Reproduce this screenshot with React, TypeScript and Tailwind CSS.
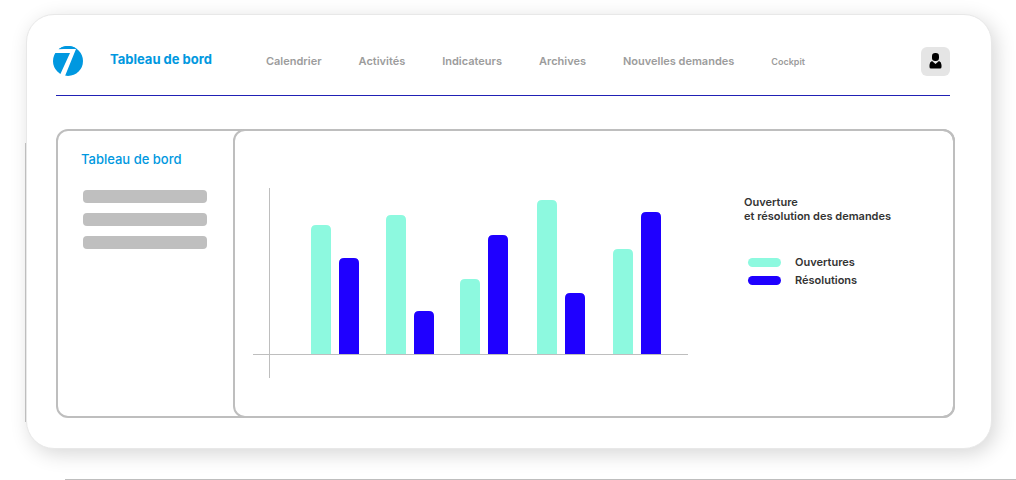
import type React from 'react';

interface Demand {
  x: number;
  opened: number;
  resolved: number;
}

const DEMANDS: Demand[] = [
  { x: 58, opened: 129, resolved: 96 },
  { x: 133, opened: 139, resolved: 43 },
  { x: 207, opened: 75, resolved: 119 },
  { x: 284, opened: 154, resolved: 61 },
  { x: 360, opened: 105, resolved: 142 },
];

const NAV_ITEMS = [
  'Calendrier',
  'Activités',
  'Indicateurs',
  'Archives',
  'Nouvelles demandes',
];

const BASELINE = 166;

const Logo: React.FC = () => (
  <svg width="30" height="30" viewBox="0 0 30 30" aria-hidden="true">
    <circle cx="15" cy="15" r="15" fill="#0098e0" />
    <path d="M2 3H23L12 30H6.5L17 7H1Z" fill="#fff" />
    <path d="M5.5 3.2A15 15 0 0 1 22.5 2L22 2.5Z" fill="#0098e0" />
  </svg>
);

const barPath = (x: number, height: number) => {
  const top = BASELINE - height;
  return `M${x} ${BASELINE}V${top + 5}Q${x} ${top} ${x + 5} ${top}H${x + 15}Q${x + 20} ${top} ${x + 20} ${top + 5}V${BASELINE}Z`;
};

const DemandChart: React.FC = () => (
  <svg
    width="435"
    height="190"
    viewBox="0 0 435 190"
    role="img"
    aria-label="Ouverture et résolution des demandes"
    className="shrink-0"
  >
    {DEMANDS.map((demand) => (
      <g key={demand.x}>
        <path d={barPath(demand.x, demand.opened)} fill="#8df9df" />
        <path d={barPath(demand.x + 28, demand.resolved)} fill="#1f00ff" />
      </g>
    ))}
    <rect x="16" y="0" width="1" height="190" fill="#bebebe" />
    <rect x="0" y="166" width="435" height="1" fill="#bebebe" />
  </svg>
);

const Header: React.FC = () => (
  <header className="flex items-center pt-[31px] pb-[18px] pl-[26px] pr-[41px]">
    <Logo />
    <a
      href="#"
      className="ml-[27px] text-[13px] leading-5 pb-1 font-bold text-[#0098e0] whitespace-nowrap"
    >
      Tableau de bord
    </a>
    <nav className="ml-[54px] flex items-baseline gap-[37px] text-[11px] leading-4 font-semibold text-[#9c9c9c] whitespace-nowrap">
      {NAV_ITEMS.map((item) => (
        <a key={item} href="#">
          {item}
        </a>
      ))}
      <a href="#" className="text-[9px]">
        Cockpit
      </a>
    </nav>
    <button
      type="button"
      aria-label="Profil"
      className="ml-auto flex size-[29px] shrink-0 items-center justify-center rounded-md bg-[#e5e5e5]"
    >
      <svg width="13" height="16" viewBox="0 0 13 16" aria-hidden="true">
        <rect x="3" y="0" width="7" height="8" rx="3.2" />
        <path d="M3 8L6.5 11L10 8Q12.5 9 12.5 12V14Q12.5 15.5 11 15.5H2Q.5 15.5 .5 14V12Q.5 9 3 8Z" />
      </svg>
    </button>
  </header>
);

const Sidebar: React.FC = () => (
  <aside className="w-[175px] shrink-0 pt-[18px] pl-[23px]">
    <h2 className="text-[13px] leading-5 font-medium text-[#0098e0]">
      Tableau de bord
    </h2>
    <div className="mt-[21px] ml-0.5 flex w-[124px] flex-col gap-[10px]">
      <div className="h-[13px] rounded bg-[#bfbfbf]" />
      <div className="h-[13px] rounded bg-[#bfbfbf]" />
      <div className="h-[13px] rounded bg-[#bfbfbf]" />
    </div>
  </aside>
);

const Legend: React.FC = () => (
  <div className="ml-14 mt-[7px] text-[11px] font-semibold text-[#333] whitespace-nowrap">
    <h3 className="leading-[14px]">
      Ouverture
      <br />
      et résolution des demandes
    </h3>
    <ul className="mt-[30px] ml-1 leading-[18px]">
      <li className="flex items-center gap-[14px]">
        <span className="h-[9px] w-[33px] rounded-full bg-[#8df9df]" />
        Ouvertures
      </li>
      <li className="flex items-center gap-[14px]">
        <span className="h-[9px] w-[33px] rounded-full bg-[#1f00ff]" />
        Résolutions
      </li>
    </ul>
  </div>
);

export default function App() {
  return (
    <div className="overflow-hidden bg-white pt-[14px] font-['Inter',sans-serif]">
      <div className="relative ml-[26px] mr-6 rounded-[28px] border border-[#e8e8e8] bg-white pb-[30px] shadow-[4px_5px_20px_rgba(0,0,0,0.16)]">
        <div className="absolute top-32 bottom-[26px] -left-0.5 w-px bg-[#bebebe]" />
        <Header />
        <hr className="ml-[29px] mr-[41px] mt-px border-0 h-px bg-[#2121b5]" />
        <main className="mt-[33px] ml-[29px] mr-9 flex rounded-xl border-2 border-[#bebebe]">
          <Sidebar />
          <section className="-my-0.5 -mr-0.5 flex min-h-[289px] grow rounded-xl border-2 border-[#bebebe] pt-[57px] pl-[18px]">
            <DemandChart />
            <Legend />
          </section>
        </main>
      </div>
      <div className="mt-[30px] ml-[65px] h-px bg-[#bebebe]" />
    </div>
  );
}
